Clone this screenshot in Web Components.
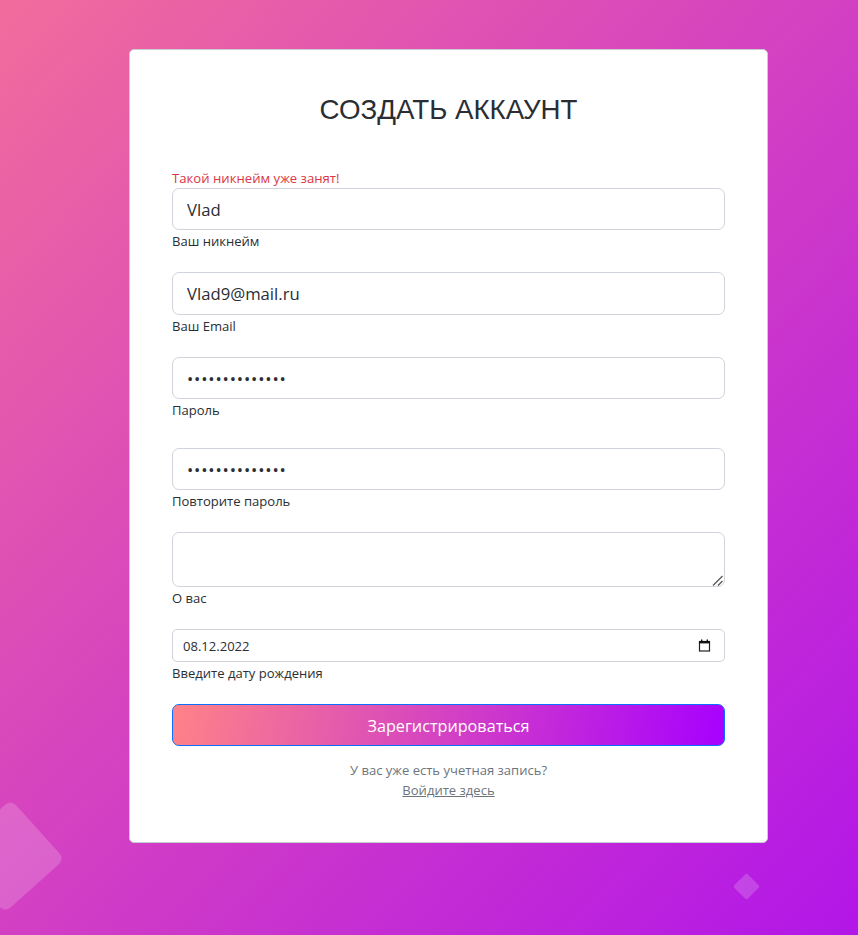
<!DOCTYPE html>
<html lang="ru">
<head>
<meta charset="utf-8">
<title>Создать аккаунт</title>
<style>
    html, body { margin: 0; padding: 0; height: 100%; }
    body { font-family: "Open Sans", "Noto Sans", sans-serif; overflow: hidden; }
</style>
</head>
<body>
<signup-page>
    <signup-card heading="СОЗДАТЬ АККАУНТ">
        <form-field error="Такой никнейм уже занят!" label="Ваш никнейм" value="Vlad" gap="20"></form-field>
        <form-field label="Ваш Email" value="Vlad9@mail.ru" height="43" gap="20"></form-field>
        <form-field label="Пароль" type="password" value="Password12345!" gap="27"></form-field>
        <form-field label="Повторите пароль" type="password" value="Password12345!" gap="20"></form-field>
        <form-field label="О вас" type="textarea" height="55" gap="20"></form-field>
        <date-field label="Введите дату рождения" value="08.12.2022"></date-field>
        <gradient-button>Зарегистрироваться</gradient-button>
        <div slot="footer">У вас уже есть учетная запись?</div>
        <a slot="footer" href="#">Войдите здесь</a>
    </signup-card>
</signup-page>

<script>
// Full window gradient with the two faded squares behind the card.
class SignupPage extends HTMLElement {
    constructor() {
        super();
        this.attachShadow({ mode: 'open' }).innerHTML = `
<style>
    :host {
        display: flex;
        align-items: flex-start;
        position: relative;
        height: 935px;
        padding: 49px 0 0 129px;
        box-sizing: border-box;
        overflow: hidden;
        background: linear-gradient(to bottom right, #f26c9c 0%, #d846bd 42%, #b216e8 100%);
    }
    .shape {
        position: absolute;
        background: rgba(255, 255, 255, 0.18);
        transform: rotate(45deg);
    }
    .big { left: -32px; top: 816px; width: 80px; height: 80px; border-radius: 7px; transform: rotate(48deg); }
    .small { left: 737px; top: 877px; width: 19px; height: 19px; border-radius: 2px; }
</style>
<div class="shape big"></div>
<div class="shape small"></div>
<slot></slot>
`;
    }
}

// White card holding the title, the fields and the footer links.
class SignupCard extends HTMLElement {
    constructor() {
        super();
        this.attachShadow({ mode: 'open' }).innerHTML = `
<style>
    :host {
        display: block;
        position: relative;
        flex: none;
        width: 639px;
        height: 794px;
        box-sizing: border-box;
        padding: 38px 42px 0;
        background: #fff;
        border: 1px solid #c9cdd2;
        border-radius: 5px;
    }
    h2 {
        margin: 0 0 38px;
        height: 44px;
        line-height: 44px;
        text-align: center;
        text-transform: uppercase;
        font-family: "Liberation Sans", Arial, sans-serif;
        font-size: 27.7px;
        font-weight: 400;
        color: #2a2e33;
    }
    .footer {
        margin-top: 14px;
        text-align: center;
        font-size: 13.05px;
        line-height: 20px;
        color: #6c757d;
    }
    ::slotted(a) { color: #6c757d; }
</style>
<h2></h2>
<slot></slot>
<div class="footer"><slot name="footer"></slot></div>
`;
        this.shadowRoot.querySelector('h2').textContent = this.getAttribute('heading');
    }
}

// One input with an optional error line above and a small label below.
class FormField extends HTMLElement {
    constructor() {
        super();
        const height = this.getAttribute('height') || 42;
        const gap = this.getAttribute('gap') || 20;
        this.attachShadow({ mode: 'open' }).innerHTML = `
<style>
    :host { display: block; margin-bottom: ${gap}px; }
    .error { color: #dc3545; font-size: 13.15px; line-height: 16px; height: 18px; }
    .wrap { position: relative; }
    .box {
        display: block;
        width: 100%;
        height: ${height}px;
        box-sizing: border-box;
        padding: 0 14px;
        border: 1px solid #ced4da;
        border-radius: 7px;
        background: #fff;
        color: #2a2e33;
        font-family: "Open Sans", "Noto Sans", sans-serif;
        font-size: 16.7px;
        outline: none;
    }
    input[type=password] { letter-spacing: 0.85px; }
    textarea.box { padding: 6px 14px; resize: none; }
    svg { position: absolute; right: 1px; bottom: 1px; width: 12px; height: 12px; }
    label { display: block; color: #2a2e33; font-size: 13.05px; line-height: 20px; height: 21px; margin-top: 1px; }
</style>
`;
        if (this.hasAttribute('error')) {
            const err = document.createElement('div');
            err.className = 'error';
            err.textContent = this.getAttribute('error');
            this.shadowRoot.appendChild(err);
        }
        const type = this.getAttribute('type') || 'text';
        const wrap = document.createElement('div');
        wrap.className = 'wrap';
        const box = document.createElement(type === 'textarea' ? 'textarea' : 'input');
        box.className = 'box';
        if (type !== 'textarea') box.type = type;
        box.value = this.getAttribute('value') || '';
        wrap.appendChild(box);
        if (type === 'textarea') {
            // Resize grip, two short diagonal strokes in the corner.
            wrap.insertAdjacentHTML('beforeend', `
<svg viewBox="0 0 12 12" fill="none" stroke="#555" stroke-width="1.3">
    <path d="M1 11.5L10.5 2"></path>
    <path d="M6 11.5L10.5 7"></path>
</svg>`);
        }
        this.shadowRoot.appendChild(wrap);
        const label = document.createElement('label');
        label.textContent = this.getAttribute('label');
        this.shadowRoot.appendChild(label);
    }
}

// Small date row: text value with the calendar glyph on the right.
class DateField extends HTMLElement {
    constructor() {
        super();
        this.attachShadow({ mode: 'open' }).innerHTML = `
<style>
    :host { display: block; margin-bottom: 20px; }
    .wrap { position: relative; }
    input {
        display: block;
        width: 100%;
        height: 33px;
        box-sizing: border-box;
        padding: 0 10px;
        border: 1px solid #ced4da;
        border-radius: 5px;
        color: #2a2e33;
        background: #fff;
        font-family: "Open Sans", "Noto Sans", sans-serif;
        font-size: 13.05px;
        outline: none;
    }
    svg { position: absolute; right: 14px; top: 10px; width: 13px; height: 13px; }
    label { display: block; color: #2a2e33; font-size: 13.05px; line-height: 20px; height: 21px; margin-top: 1px; }
</style>
<div class="wrap">
    <input type="text">
    <svg viewBox="0 0 13 13" fill="none">
        <rect x="1.5" y="2.5" width="10" height="9.5" stroke="#222" stroke-width="1.2"></rect>
        <rect x="1" y="2" width="11" height="2.4" fill="#111"></rect>
        <rect x="3" y="0.5" width="1.4" height="2" fill="#111"></rect>
        <rect x="8.6" y="0.5" width="1.4" height="2" fill="#111"></rect>
    </svg>
</div>
<label></label>
`;
        this.shadowRoot.querySelector('input').value = this.getAttribute('value');
        this.shadowRoot.querySelector('label').textContent = this.getAttribute('label');
    }
}

// Submit button, gradient fill with the focus blue border.
class GradientButton extends HTMLElement {
    constructor() {
        super();
        this.attachShadow({ mode: 'open' }).innerHTML = `
<style>
    :host { display: block; }
    button {
        display: block;
        width: 100%;
        height: 42px;
        padding: 2px 0 0;
        border: 1px solid #0d6efd;
        border-radius: 7px;
        background: linear-gradient(100deg, #ff8288 0%, #a800ff 100%);
        color: #fff;
        font-family: "Open Sans", "Noto Sans", sans-serif;
        font-size: 16.2px;
    }
</style>
<button type="button"><slot></slot></button>
`;
    }
}

customElements.define('signup-page', SignupPage);
customElements.define('signup-card', SignupCard);
customElements.define('form-field', FormField);
customElements.define('date-field', DateField);
customElements.define('gradient-button', GradientButton);
</script>
</body>
</html>
